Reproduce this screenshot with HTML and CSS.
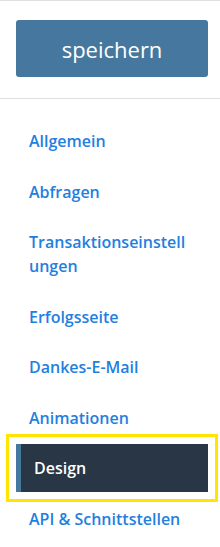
FILE: index.html
```html
<!DOCTYPE html>
<html lang="de">
<head>
    <meta charset="UTF-8">
    <meta name="viewport" content="width=device-width, initial-scale=1.0">
    <title>Einstellungen</title>
    <link rel="stylesheet" href="styles.css">
</head>
<body>
    <div class="sidebar">
        <div class="save-box">
            <button class="save-btn" type="button">speichern</button>
        </div>
        <ul class="menu">
            <li><a href="#">Allgemein</a></li>
            <li><a href="#">Abfragen</a></li>
            <li><a href="#">Transaktionseinstellungen</a></li>
            <li><a href="#">Erfolgsseite</a></li>
            <li><a href="#">Dankes-E-Mail</a></li>
            <li><a href="#">Animationen</a></li>
            <li class="active"><a href="#">Design</a></li>
            <li><a href="#">API &amp; Schnittstellen</a></li>
        </ul>
    </div>
</body>
</html>
```

FILE: styles.css
```css
body {
    font-family: "Open Sans", "Liberation Sans", sans-serif;
    margin: 0;
    padding: 0;
    background-color: white;
}

.sidebar {
    width: 220px;
    border-top: 1px solid #e0e0e0;
}

.save-box {
    padding: 19px 12px 21px 16px;
    border-bottom: 1px solid #dedede;
}

.save-btn {
    display: block;
    width: 192px;
    height: 57px;
    padding: 0;
    font-family: inherit;
    font-size: 22px;
    color: white;
    background-color: #46789f;
    border: none;
    border-radius: 3px;
    cursor: pointer;
}

.menu {
    list-style: none;
    margin: 0;
    padding: 18px 12px 0 16px;
}

.menu li {
    margin-bottom: 2.5px;
}

.menu a {
    display: block;
    padding: 12px 13px;
    font-size: 16px;
    font-weight: 600;
    line-height: 24px;
    color: #1f80e0;
    text-decoration: none;
    word-break: break-all;
}

.menu .active a {
    padding-left: 13px;
    color: white;
    background-color: #293645;
    border-left: 5px solid #46789f;
    outline: 3px solid #ffe500;
    outline-offset: 7px;
}
```
